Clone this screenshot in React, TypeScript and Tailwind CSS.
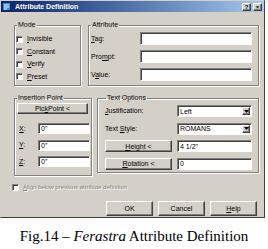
import type { ReactNode } from 'react';

const raised =
  'border border-t-white border-l-white border-r-[#404040] border-b-[#404040] shadow-[inset_-1px_-1px_0_#808080] bg-[#d4d0c8]';
const sunken =
  'border border-t-[#808080] border-l-[#808080] border-r-white border-b-white shadow-[inset_1px_1px_0_#404040] bg-white';
const etched = 'border border-[#808080] shadow-[1px_1px_0_#fff,inset_1px_1px_0_#fff]';

function U({ children }: { children: ReactNode }) {
  return <span className="underline underline-offset-1">{children}</span>;
}

function Check({ children, disabled }: { children: ReactNode; disabled?: boolean }) {
  return (
    <div className="flex h-[12.5px] items-center gap-[4px]">
      <span className={`block h-[7px] w-[7px] ${sunken} ${disabled ? 'bg-[#d4d0c8]' : ''}`} />
      <span className={disabled ? 'text-[#808080] [text-shadow:1px_1px_0_#fff]' : ''}>{children}</span>
    </div>
  );
}

function Field({ value, w, h = 'h-[13px]' }: { value?: string; w: string; h?: string }) {
  return (
    <div className={`${sunken} ${w} ${h} flex items-center pl-[2px] text-[7px] leading-none`}>
      {value}
    </div>
  );
}

function Select({ value }: { value: string }) {
  return (
    <div className={`${sunken} flex h-[12px] w-[75px] items-center pl-[2px] pr-[1px] text-[7px] leading-none`}>
      <span className="flex-1">{value}</span>
      <span className={`${raised} flex h-[8px] w-[8px] items-center justify-center`}>
        <svg width="5" height="3" viewBox="0 0 5 3" aria-hidden>
          <path d="M0 0h5L2.5 3z" fill="#000" />
        </svg>
      </span>
    </div>
  );
}

function Button({ children, w, h }: { children: ReactNode; w: string; h: string }) {
  return (
    <div className={`${raised} ${w} ${h} flex items-center justify-center text-[7px] leading-none`}>
      {children}
    </div>
  );
}

export default function App() {
  return (
    <div className="h-[249px] w-[268px] bg-white font-['Liberation_Sans',Arial,sans-serif] text-[7px] leading-[8px] text-black">
      {/* Dialog window */}
      <div className="flex h-[218px] w-[265px] flex-col border border-t-[#d4d0c8] border-l-[#d4d0c8] border-r-[#404040] border-b-[#404040] bg-[#d4d0c8]">
        <div className="flex h-[11px] items-center bg-linear-to-r from-[#0a246a] to-[#a6caf0] pl-[2px] pr-[2px]">
          <svg width="7" height="7" viewBox="0 0 7 7" aria-hidden>
            <rect x="0" y="0" width="7" height="7" fill="#3a8fd6" />
            <path d="M1 2h5M1 4h5M1 6h3" stroke="#e8f4ff" strokeWidth="1" />
          </svg>
          <span className="ml-[5px] text-[7px] font-bold leading-none text-white">Attribute Definition</span>
          <div className="ml-auto flex gap-[1px]">
            <span className={`${raised} flex h-[8px] w-[9px] items-center justify-center text-[6px] font-bold leading-none`}>?</span>
            <span className={`${raised} ml-[1px] flex h-[8px] w-[9px] items-center justify-center text-[6px] font-bold leading-none`}>×</span>
          </div>
        </div>

        <div className="flex flex-col pl-[13px]">
          {/* Mode + Attribute */}
          <div className="mt-[9px] flex gap-[7px]">
            <fieldset className={`${etched} h-[65px] w-[67px]`}>
              <legend className="ml-[2px] px-[1px] leading-[8px]">Mode</legend>
              <div className="flex flex-col pl-[1px] pt-[4px]">
                <Check><U>I</U>nvisible</Check>
                <Check><U>C</U>onstant</Check>
                <Check><U>V</U>erify</Check>
                <Check><U>P</U>reset</Check>
              </div>
            </fieldset>
            <fieldset className={`${etched} h-[65px] w-[171px]`}>
              <legend className="ml-[2px] px-[1px] leading-[8px]">Attribute</legend>
              <div className="flex flex-col gap-[5px] pl-[2px] pt-[3px]">
                <div className="flex items-center">
                  <span className="w-[49px]"><U>T</U>ag:</span>
                  <Field w="w-[112px]" />
                </div>
                <div className="flex items-center">
                  <span className="w-[49px]">Pro<U>m</U>pt:</span>
                  <Field w="w-[112px]" />
                </div>
                <div className="flex items-center">
                  <span className="w-[49px]">V<U>a</U>lue:</span>
                  <Field w="w-[112px]" />
                </div>
              </div>
            </fieldset>
          </div>

          {/* Insertion Point + Text Options */}
          <div className="mt-[8px] flex items-start gap-[5px]">
            <fieldset className={`${etched} h-[82px] w-[78px]`}>
              <legend className="ml-[2px] px-[1px] leading-[8px]">Insertion Point</legend>
              <div className="flex flex-col pl-[2px] pt-[1px]">
                <Button w="w-[71px]" h="h-[11px]">
                  Pic<U>k</U>{' '}Point&nbsp;&lt;
                </Button>
                <div className="mt-[9px] flex flex-col gap-[5.5px]">
                  {['X', 'Y', 'Z'].map((a) => (
                    <div key={a} className="flex items-center pl-[2px]">
                      <span className="w-[19px]"><U>{a}</U>:</span>
                      <Field value={'0"'} w="w-[52px]" h="h-[11px]" />
                    </div>
                  ))}
                </div>
              </div>
            </fieldset>
            <fieldset className={`${etched} h-[79px] w-[162px]`}>
              <legend className="ml-[8px] px-[1px] leading-[8px]">Text Options</legend>
              <div className="flex flex-col gap-[5.5px] pl-[7px] pt-[3px]">
                <div className="flex items-center">
                  <span className="w-[72px]"><U>J</U>ustification:</span>
                  <Select value="Left" />
                </div>
                <div className="flex items-center">
                  <span className="w-[72px]">Text <U>S</U>tyle:</span>
                  <Select value="ROMANS" />
                </div>
                <div className="flex items-center gap-[5px]">
                  <Button w="w-[67px]" h="h-[12px]"><U>H</U>eight&nbsp;&lt;</Button>
                  <Field value={'4 1/2"'} w="w-[75px]" h="h-[12px]" />
                </div>
                <div className="flex items-center gap-[5px]">
                  <Button w="w-[67px]" h="h-[12px]"><U>R</U>otation&nbsp;&lt;</Button>
                  <Field value="0" w="w-[75px]" h="h-[12px]" />
                </div>
              </div>
            </fieldset>
          </div>

          <div className="-ml-[2px] mt-[5px] text-[6px]">
            <Check disabled>
              <U>A</U>lign below previous attribute definition
            </Check>
          </div>

          <div className="mt-[7px] flex gap-[5px] pl-[92px]">
            <Button w="w-[47px]" h="h-[15px]">OK</Button>
            <Button w="w-[47px]" h="h-[15px]">Cancel</Button>
            <Button w="w-[47px]" h="h-[15px]"><U>H</U>elp</Button>
          </div>
        </div>
      </div>

      <p className="mt-[10px] text-center font-['Liberation_Serif','Times_New_Roman',serif] text-[15px] leading-[16px]">
        Fig.14 – <i>Ferastra</i> Attribute Definition
      </p>
    </div>
  );
}
